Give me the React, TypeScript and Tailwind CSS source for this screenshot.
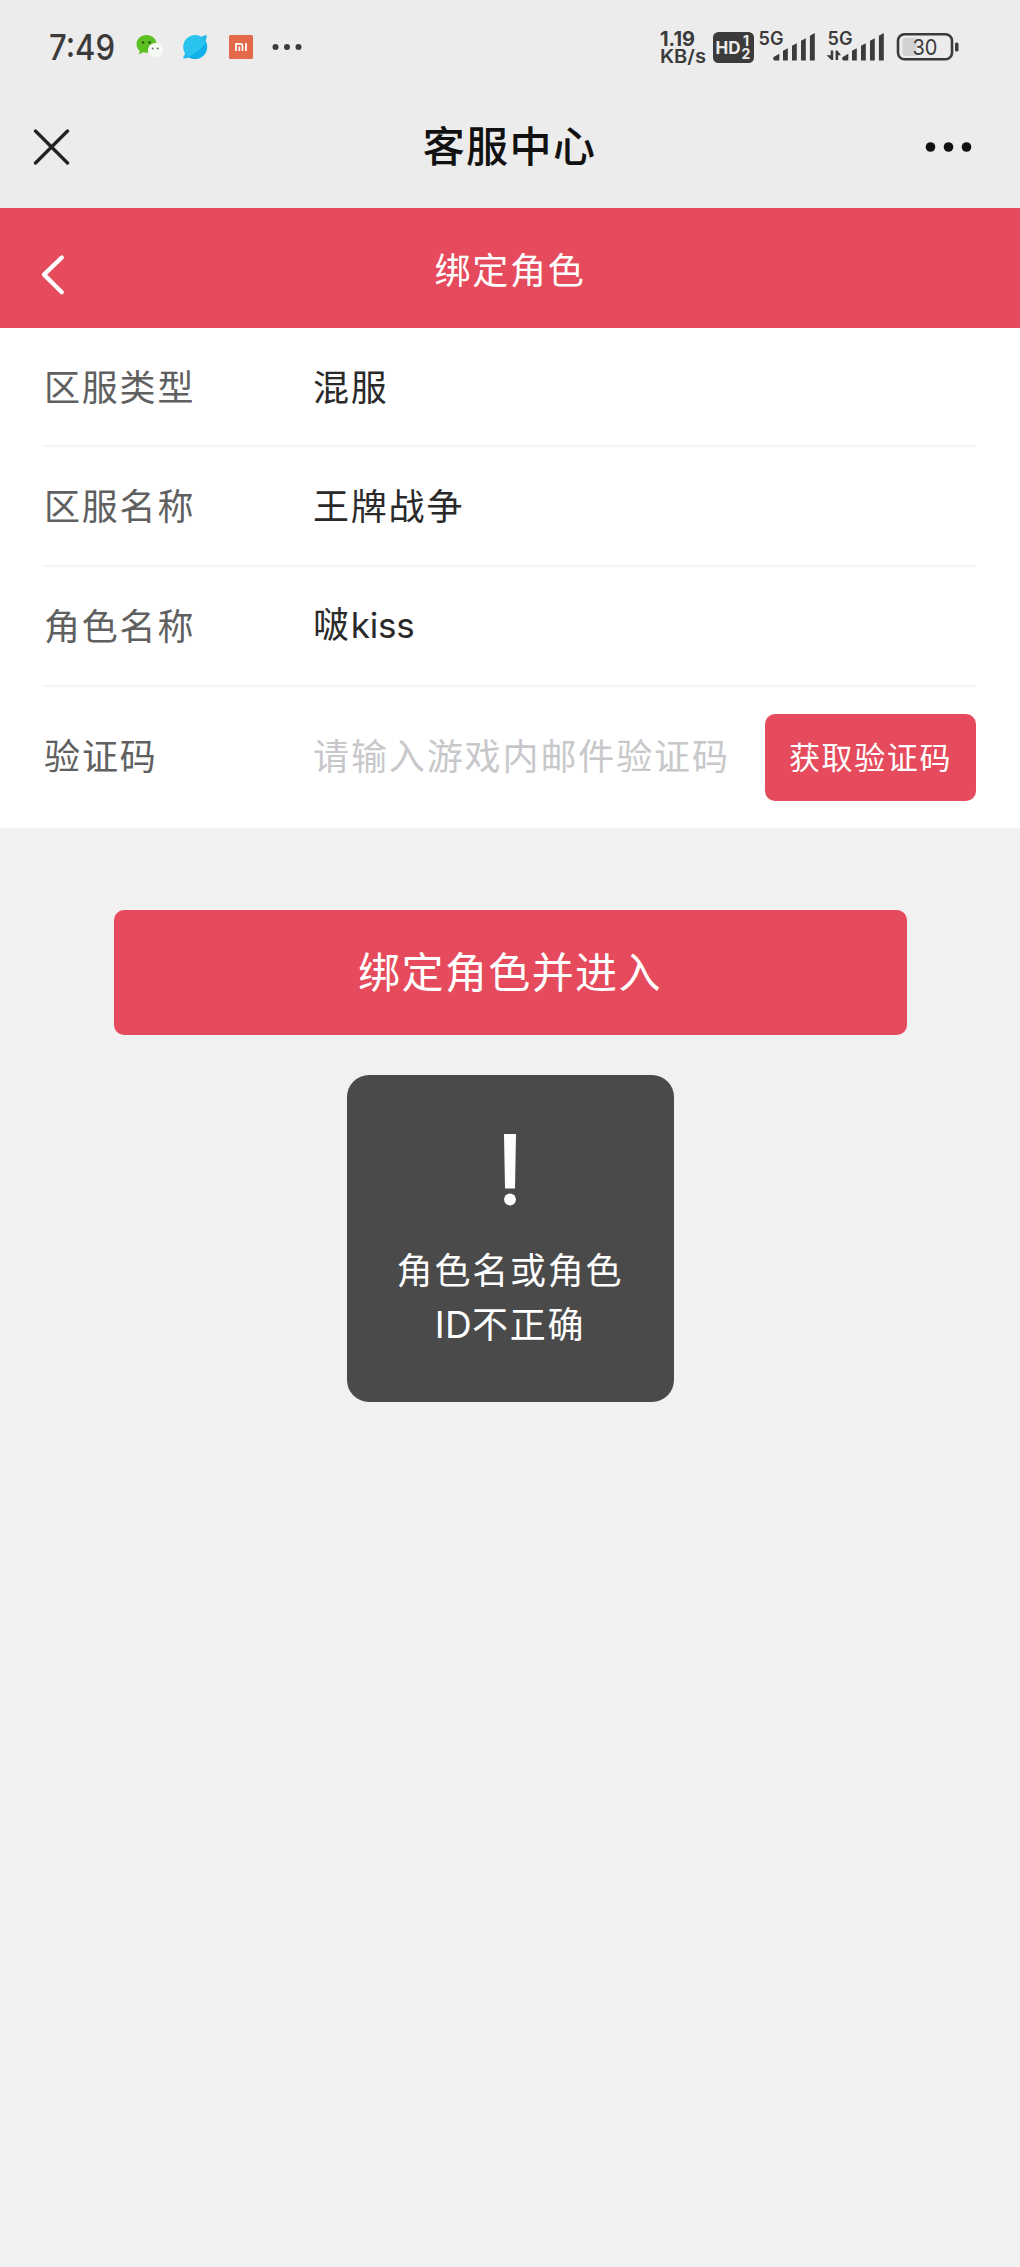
const rows = [
    { label: '区服类型', value: '混服' },
    { label: '区服名称', value: '王牌战争' },
    { label: '角色名称', value: '啵', latin: 'kiss' },
];

function Signal({ arrows = false }: { arrows?: boolean }) {
    return (
        <svg className="overflow-visible" width="57" height="32" viewBox="0 0 57 32" fill="#3b3b3b">
            <text
                x="-0.5"
                y="14"
                fontSize="18"
                fontWeight="600"
                fontFamily="Inter, sans-serif"
                textLength="25"
                lengthAdjust="spacingAndGlyphs"
            >
                5G
            </text>
            {arrows && (
                <path d="M5.200 19.500v9.500H3.400L-1.500 24.300h4.200v-4.800zM7.600 29v-9.500h1.800l3.600 4.700h-2.900V29z" />
            )}
            <path d="M14.300 28.500v-2.200l6-3.600v6.800h-5zM24 29.500v-9.800l4.800-2.400v12.200zM33 29.500V14.800l4.800-2.600v17.300zM42 29.500V9.800l4.800-2.600v22.300zM50.900 29.500V4.800L55.800 2v27.500z" />
        </svg>
    );
}

function StatusBar() {
    return (
        <div className="flex h-[94px] items-center justify-between pl-[49px] pr-[60px] text-[#3b3b3b]">
            <div className="flex items-center">
                <svg className="overflow-visible" width="68" height="36" viewBox="0 0 68 36" fill="#3b3b3b">
                    <text
                        x="0"
                        y="30.5"
                        fontSize="35"
                        fontWeight="500"
                        fontFamily="Inter, sans-serif"
                        textLength="66"
                        lengthAdjust="spacingAndGlyphs"
                    >
                        7:49
                    </text>
                </svg>
                <svg className="ml-[18px]" width="30" height="26" viewBox="0 0 30 26">
                    <path
                        d="M11.500 1C6 1 1.500 5 1.500 10c0 3 1.400 5.300 3.300 6.900L4 20.500l4-2.200c1 .3 2.300.5 3.500.5 5.700 0 10-4 10-8.800S17.200 1 11.500 1z"
                        fill="#5cc023"
                    />
                    <circle cx="8" cy="8.500" r="1.300" fill="#27520f" />
                    <circle cx="14.600" cy="8.500" r="1.300" fill="#27520f" />
                    <path
                        d="M20.500 9c-4.200 0-7.500 3.100-7.500 7s3.300 7 7.500 7c1 0 1.800-.1 2.600-.4l2.900 1.600-.5-2.900c1.500-1.300 2.300-3.200 2.300-5.300 0-3.900-3.100-7-7.300-7z"
                        fill="#f6f9f4"
                    />
                    <circle cx="17.700" cy="14.500" r="1" fill="#667360" />
                    <circle cx="22.800" cy="14.500" r="1" fill="#667360" />
                </svg>
                <svg className="ml-[17px]" width="27" height="26" viewBox="0 0 27 26">
                    <circle cx="13.200" cy="13" r="12" fill="#28c4ee" />
                    <path d="M18.500 3C20 3 21.500 1.200 24.500 1c.8 2-.8 4-1 7.500zM3.500 18C3 21 1 22.500 1.200 24.500c2.800.6 4-1.300 6.800-1z" fill="#28b8ea" />
                    <path d="M24 8A12 12 0 0 1 6.500 23C13 20 19.500 15 24 8z" fill="#0fb0ea" />
                </svg>
                <svg className="ml-[20px]" width="24" height="24" viewBox="0 0 24 24">
                    <rect width="24" height="24" rx="1.500" fill="#e4694a" />
                    <path
                        d="M7 16V8.800h4.300c1.400 0 2.200.8 2.200 2.200v5M10.300 11.500V16M17 8v8"
                        fill="none"
                        stroke="#fff"
                        strokeWidth="1.700"
                    />
                </svg>
                <svg className="ml-[19px]" width="30" height="8" viewBox="0 0 30 8" fill="#3b3b3b">
                    <circle cx="3.500" cy="4" r="3" />
                    <circle cx="15" cy="4" r="3" />
                    <circle cx="26.500" cy="4" r="3" />
                </svg>
            </div>
            <div className="flex items-center">
                <svg className="overflow-visible" width="46" height="36" viewBox="0 0 46 36" fill="#3b3b3b" fontFamily="Inter, sans-serif" fontWeight="700">
                    <text x="-1" y="17" fontSize="20" textLength="35" lengthAdjust="spacingAndGlyphs">
                        1.19
                    </text>
                    <text x="-1" y="34" fontSize="18.500" fontWeight="600" textLength="46" lengthAdjust="spacingAndGlyphs">
                        KB/s
                    </text>
                </svg>
                <svg className="ml-[6px] overflow-visible" width="41" height="31" viewBox="0 0 41 31" fontFamily="Inter, sans-serif" fontWeight="700" fill="#ececec">
                    <rect width="41" height="31" rx="5.500" fill="#3b3b3b" />
                    <text x="2.500" y="21.500" fontSize="18" textLength="25" lengthAdjust="spacingAndGlyphs">
                        HD
                    </text>
                    <text x="30" y="14" fontSize="14">
                        1
                    </text>
                    <text x="28.500" y="27" fontSize="14">
                        2
                    </text>
                </svg>
                <div className="ml-[5px]">
                    <Signal />
                </div>
                <div className="ml-[12px]">
                    <Signal arrows />
                </div>
                <svg className="ml-[11px] overflow-visible" width="64" height="30" viewBox="0 0 64 30">
                    <rect x="2" y="2.300" width="54" height="25" rx="6.500" fill="none" stroke="#3b3b3b" strokeWidth="2.600" />
                    <path d="M9.500 6h11v18h-11a3 3 0 0 1-3-3V9a3 3 0 0 1 3-3z" fill="#d2d2d2" />
                    <rect x="59" y="10.500" width="3.500" height="9" rx="1.500" fill="#3b3b3b" />
                    <text x="16.500" y="22.700" fontSize="22" fontFamily="Inter, sans-serif" fill="#3b3b3b" textLength="25" lengthAdjust="spacingAndGlyphs">
                        30
                    </text>
                </svg>
            </div>
        </div>
    );
}

export default function App() {
    return (
        <div className="min-h-[2267px] w-[1020px] bg-[#f1f1f1] font-['Noto_Sans_CJK_SC',sans-serif]">
            <header className="h-[208px] bg-[#ececec]">
                <StatusBar />
                <div className="flex h-[106px] items-center justify-between pl-[33px] pr-[48px]">
                    <svg width="37" height="37" viewBox="0 0 37 37" stroke="#222" strokeWidth="3.300" strokeLinecap="round">
                        <path d="M2.500 2l32 32M34.500 2l-32 32" />
                    </svg>
                    <h1 className="mb-[6px] pl-[24px] text-[42px] leading-none font-medium tracking-[1.400px] text-[#111]">
                        客服中心
                    </h1>
                    <svg width="47" height="12" viewBox="0 0 47 12" fill="#111">
                        <circle cx="5.500" cy="6" r="4.800" />
                        <circle cx="23.500" cy="6" r="4.800" />
                        <circle cx="41.500" cy="6" r="4.800" />
                    </svg>
                </div>
            </header>

            <nav className="flex h-[120px] items-center justify-between bg-[#e54b5c] px-[40px] text-white">
                <svg className="mt-[14px]" width="26" height="42" viewBox="0 0 26 42" fill="none" stroke="#fff" strokeWidth="4.300" strokeLinecap="round" strokeLinejoin="round">
                    <path d="M21.800 3.500L4 20.600l17.800 17.600" />
                </svg>
                <h2 className="text-[36px] leading-none tracking-[1.800px]">绑定角色</h2>
                <span className="w-[26px]" />
            </nav>

            <section className="bg-white pr-[44px] pl-[43px]">
                {rows.map((row, i) => (
                    <div
                        key={row.label}
                        className={`flex items-center border-b-2 border-[#f5f5f5] text-[36px] leading-none tracking-[1.800px] ${i === 0 ? 'h-[119px] pb-[3px]' : 'h-[120px] pb-[5px]'}`}
                    >
                        <span className="w-[270px] pl-[1px] text-[#606060]">{row.label}</span>
                        <span className="text-[#2a2a2a]">
                            {row.value}
                            {row.latin && <span className="font-[Inter] text-[35px] leading-none tracking-[-0.200px]">{row.latin}</span>}
                        </span>
                    </div>
                ))}
                <div className="flex h-[141px] items-center text-[36px] leading-none tracking-[1.900px]">
                    <span className="w-[270px] shrink-0 pb-[7px] pl-[1px] text-[#606060]">验证码</span>
                    <span className="pb-[7px] whitespace-nowrap text-[#c8c8ca]">请输入游戏内邮件验证码</span>
                    <button className="ml-auto h-[87px] w-[211px] shrink-0 rounded-[10px] bg-[#e54b5c] pb-[5px] text-[31px] leading-none tracking-[1.600px] text-white">
                        获取验证码
                    </button>
                </div>
            </section>

            <main className="flex flex-col items-center pt-[82px]">
                <button className="h-[125px] w-[793px] rounded-[10px] bg-[#e54b5c] pb-[5px] text-[42px] leading-none tracking-[1.400px] text-white">
                    绑定角色并进入
                </button>
                <div className="mt-[40px] flex h-[327px] w-[327px] flex-col items-center rounded-[22px] bg-[#4a4a4a] pt-[59px] text-white">
                    <svg width="12" height="72" viewBox="0 0 12 72" fill="#fff">
                        <path d="M0 .5Q0 0 .5 0h11q.5 0 .5.5L11 54q0 .6-.6.6H1.600Q1 54.600 1 54z" />
                        <circle cx="6" cy="65.500" r="5.900" />
                    </svg>
                    <p className="mt-[35px] text-center text-[36px] leading-[54px] tracking-[1.800px]">
                        角色名或角色
                        <br />
                        <span className="font-[Inter] text-[37px] tracking-[0.300px]">ID</span>不正确
                    </p>
                </div>
            </main>
        </div>
    );
}
